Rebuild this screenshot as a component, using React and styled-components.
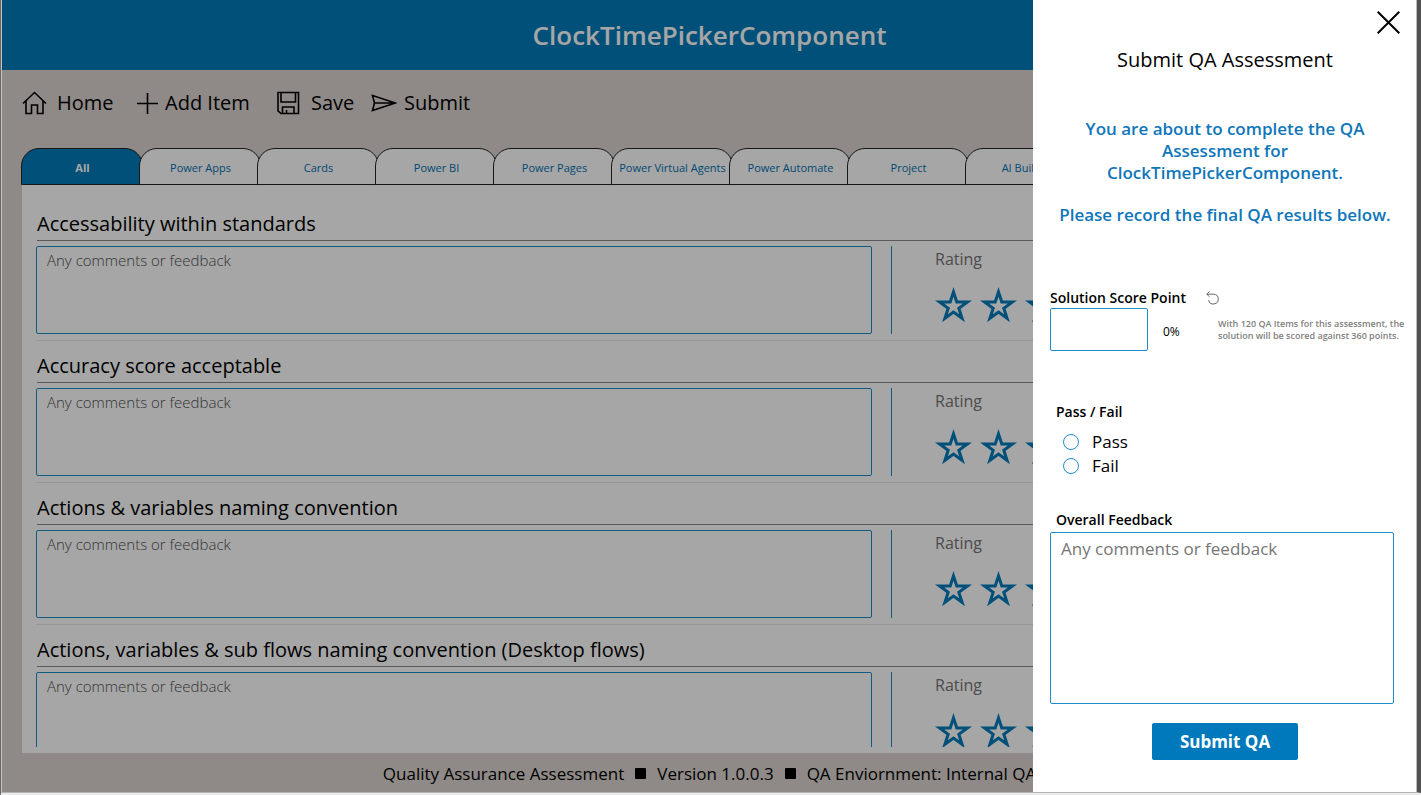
import React, { useState } from "react";
import styled, { createGlobalStyle, ThemeProvider } from "styled-components";

const theme = {
  blue: "#007bbc",
  ink: "#000000",
  muted: "#767676",
  canvas: "#dcd4d1",
  line: "#1f8ccb",
};

const GlobalStyle = createGlobalStyle`
  *, *::before, *::after { box-sizing: border-box; }
  body {
    margin: 0;
    background: #ebebeb;
    font-family: "Open Sans", "Noto Sans", sans-serif;
    color: ${theme.ink};
  }
  button, input, textarea { font: inherit; color: inherit; }
  button { cursor: pointer; }
`;

const Viewport = styled.div`
  height: 100vh;
  min-height: 640px;
  padding-bottom: 2px;
  border-left: 1px solid #6a6a6a;
  overflow: hidden;
`;

const Frame = styled.div`
  position: relative;
  height: 100%;
  border-style: solid;
  border-width: 0 4px 1px 1px;
  border-color: transparent #525252 #b4b4b4 #c0c0c0;
  overflow: hidden;
`;

const Page = styled.div`
  display: flex;
  flex-direction: column;
  height: 100%;
  background: ${(p) => p.theme.canvas};
`;

const Header = styled.header`
  display: flex;
  align-items: center;
  justify-content: center;
  flex: 0 0 70px;
  background: ${(p) => p.theme.blue};
`;

const AppTitle = styled.h1`
  margin: 0;
  font-size: 26px;
  line-height: 36px;
  font-weight: 600;
  color: #fff;
`;

const Toolbar = styled.nav`
  display: flex;
  align-items: center;
  flex: 0 0 66px;
  padding-left: 20px;
`;

const ToolButton = styled.button`
  display: flex;
  align-items: center;
  width: ${(p) => p.$width}px;
  padding: 0;
  border: 0;
  background: none;
  font-size: 20px;
  line-height: 28px;
  white-space: nowrap;
`;

const ToolIcon = styled.span`
  display: flex;
  flex: 0 0 ${(p) => p.$slot}px;
  svg { display: block; }
`;

const Tabs = styled.div`
  display: flex;
  flex: 0 0 37px;
  margin: 12px 20px 0 19px;
  overflow: hidden;
`;

const Tab = styled.button`
  flex: 0 0 122px;
  margin-right: -4px;
  padding: 2px 0 0 1px;
  border: 1px solid #222;
  border-radius: 18px 18px 0 0;
  background: ${(p) => (p.$active ? p.theme.blue : "#fff")};
  color: ${(p) => (p.$active ? "#fff" : "#0070b0")};
  font-size: 11px;
  line-height: 16px;
  font-weight: ${(p) => (p.$active ? 700 : 400)};
  white-space: nowrap;
`;

const Card = styled.main`
  flex: 1 1 0;
  min-height: 0;
  margin: 0 20px;
  padding: 14px 15px 6px 14px;
  background: #fff;
`;

const List = styled.div`
  height: 100%;
  overflow: hidden;
`;

const Item = styled.section`
  height: 142px;
  border-bottom: 1px solid #e6e6e6;
`;

const ItemTitle = styled.h2`
  height: 42px;
  margin: 0 0 5px 1px;
  padding-top: 11px;
  border-bottom: 1px solid #8a8a8a;
  font-size: 20px;
  line-height: 28px;
  font-weight: 400;
`;

const ItemBody = styled.div`
  display: flex;
  height: 88px;
`;

const TextArea = styled.textarea`
  display: block;
  resize: none;
  border: 1px solid ${(p) => p.theme.line};
  border-radius: 2px;
  background: #fff;
  outline: 0;
  &::placeholder { color: ${(p) => p.theme.muted}; opacity: 1; }
`;

const ItemComments = styled(TextArea)`
  flex: 1;
  padding: 3px 10px;
  font-size: 15px;
  line-height: 20px;
  font-weight: 300;
  &::placeholder { color: #505050; }
`;

const Rating = styled.div`
  flex: 0 0 491px;
  margin-left: 19px;
  padding-left: 43px;
  border-left: 1px solid ${(p) => p.theme.line};
`;

const RatingLabel = styled.div`
  font-size: 16px;
  line-height: 26px;
  color: ${(p) => p.theme.muted};
`;

const Stars = styled.div`
  display: flex;
  gap: 8px;
  margin-top: 14px;
`;

const StarButton = styled.button`
  padding: 0;
  border: 0;
  background: none;
  color: ${(p) => p.theme.blue};
  svg { display: block; }
`;

const Footer = styled.footer`
  display: flex;
  align-items: center;
  justify-content: center;
  gap: 11px;
  flex: 0 0 39px;
  padding-top: 2px;
  font-size: 17px;
  line-height: 24px;
  white-space: nowrap;
`;

const Square = styled.span`
  width: 11px;
  height: 11px;
  border-radius: 1px;
  background: #000;
`;

const Overlay = styled.div`
  position: absolute;
  inset: 0;
  display: flex;
  justify-content: flex-end;
  background: rgba(0, 0, 0, 0.35);
`;

const Panel = styled.form`
  display: flex;
  flex-direction: column;
  width: 384px;
  padding: 0 16px 0 17px;
  border-right: 1px solid #bbb;
  background: #fff;
  overflow: hidden;
`;

const CloseButton = styled.button`
  align-self: flex-end;
  margin-top: 11px;
  padding: 0;
  border: 0;
  background: none;
  svg { display: block; }
`;

const PanelTitle = styled.h2`
  margin: 12px 0 0;
  text-align: center;
  font-size: 20px;
  line-height: 28px;
  font-weight: 500;
`;

const Message = styled.div`
  margin-top: 44px;
  text-align: center;
  font-size: 17px;
  line-height: 22px;
  font-weight: 600;
  color: #0f76ba;
  p { margin: 0 0 20px; }
`;

const FieldLabel = styled.label`
  font-size: 14px;
  line-height: 20px;
  font-weight: 600;
`;

const ScoreHeading = styled.div`
  display: flex;
  align-items: center;
  gap: 20px;
  margin-top: 42px;
`;

const ResetButton = styled.button`
  padding: 0;
  border: 0;
  background: none;
  svg { display: block; }
`;

const ScoreRow = styled.div`
  display: grid;
  grid-template-columns: 98px 40px 1fr;
  column-gap: 15px;
  align-items: center;
  margin-right: -10px;
`;

const ScoreInput = styled.input`
  width: 98px;
  height: 43px;
  padding: 0 10px;
  border: 1px solid ${(p) => p.theme.line};
  border-radius: 2px;
  outline: 0;
  font-size: 17px;
`;

const Percent = styled.output`
  padding-top: 4px;
  font-size: 12px;
  line-height: 16px;
`;

const Note = styled.p`
  margin: 0;
  font-size: 9px;
  line-height: 12px;
  font-weight: 600;
  color: #808080;
  white-space: nowrap;
`;

const Choices = styled.fieldset`
  min-width: 0;
  margin: 51px 0 0;
  padding: 0 0 0 6px;
  border: 0;
  legend {
    padding: 0;
    margin-bottom: 8px;
    font-size: 14px;
    line-height: 20px;
    font-weight: 600;
  }
`;

const Choice = styled.label`
  display: flex;
  align-items: center;
  gap: 13px;
  padding-left: 7px;
  font-size: 17px;
  line-height: 24px;
`;

const Radio = styled.input`
  appearance: none;
  width: 16px;
  height: 16px;
  margin: 0;
  border: 1px solid ${(p) => p.theme.line};
  border-radius: 50%;
  background: #fff;
  &:checked { box-shadow: inset 0 0 0 3px #fff; background: ${(p) => p.theme.blue}; }
`;

const FeedbackLabel = styled(FieldLabel)`
  margin: 32px 0 2px 6px;
`;

const Feedback = styled(TextArea)`
  width: 344px;
  height: 172px;
  padding: 4px 10px;
  font-size: 17px;
  line-height: 24px;
`;

const SubmitButton = styled.button`
  align-self: center;
  margin-top: 19px;
  width: 146px;
  height: 37px;
  padding: 0;
  border: 0;
  border-radius: 2px;
  background: #0079bc;
  color: #fff;
  font-size: 17px;
  font-weight: 700;
`;

const line = { fill: "none", stroke: "currentColor", "aria-hidden": true };

const HomeIcon = () => (
  <svg width="25" height="24" viewBox="0 0 25 24" strokeWidth="1.600" {...line}>
    <path d="M1 12.5 12.5 1.5 24 12.5M4 10v12.500h5.500v-8.500h6v8.500H21V10" />
  </svg>
);

const PlusIcon = () => (
  <svg width="21" height="21" viewBox="0 0 21 21" strokeWidth="1.600" {...line}>
    <path d="M10.500 0v21M0 10.500h21" />
  </svg>
);

const SaveIcon = () => (
  <svg width="24" height="24" viewBox="0 0 24 24" strokeWidth="1.600" {...line}>
    <path d="M2 1.500h20.500v21H5L2 19.800zM5 1.500V11h14.500V1.500M6.500 22.500V16h11.500v6.500M10.500 22.500V19" />
  </svg>
);

const SendIcon = () => (
  <svg width="26" height="18" viewBox="0 0 26 18" strokeWidth="1.600" {...line}>
    <path d="M1.500 1.500 24.500 9 1.500 16.500 3.500 9zM3.500 9h20" />
  </svg>
);

const StarIcon = () => (
  <svg width="37" height="39" viewBox="0 -1 37 39" strokeWidth="3" strokeMiterlimit="10" {...line}>
    <path d="M18.500 4.900 21.780 15h10.610l-8.580 6.220 3.270 10.090-8.580-6.230-8.580 6.230 3.270-10.090L4.610 15h10.610z" />
  </svg>
);

const CloseIcon = () => (
  <svg width="23" height="23" viewBox="0 0 23 23" strokeWidth="2" {...line}>
    <path d="M.7.7l21.600 21.600M22.300.7.7 22.300" />
  </svg>
);

const ResetIcon = () => (
  <svg width="14" height="14" viewBox="0 0 14 14" strokeWidth="1" {...line} stroke="#666">
    <path d="M3.500.5.8 3.200l2.700 2.600M.8 3.200h6.700a4.900 4.900 0 1 1-4.900 6" />
  </svg>
);

const tools = [
  { label: "Home", Icon: HomeIcon, slot: 35, width: 115 },
  { label: "Add Item", Icon: PlusIcon, slot: 28, width: 139 },
  { label: "Save", Icon: SaveIcon, slot: 35, width: 95 },
  { label: "Submit", Icon: SendIcon, slot: 33, width: 110 },
];

const tabs = [
  "All",
  "Power Apps",
  "Cards",
  "Power BI",
  "Power Pages",
  "Power Virtual Agents",
  "Power Automate",
  "Project",
  "AI Builder",
];

const items = [
  "Accessability within standards",
  "Accuracy score acceptable",
  "Actions & variables naming convention",
  "Actions, variables & sub flows naming convention (Desktop flows)",
];

export default function App() {
  const [result, setResult] = useState("");
  return (
    <ThemeProvider theme={theme}>
      <GlobalStyle />
      <Viewport>
        <Frame>
          <Page>
            <Header>
              <AppTitle>ClockTimePickerComponent</AppTitle>
            </Header>
            <Toolbar>
              {tools.map(({ label, Icon, slot, width }) => (
                <ToolButton key={label} type="button" $width={width}>
                  <ToolIcon $slot={slot}>
                    <Icon />
                  </ToolIcon>
                  {label}
                </ToolButton>
              ))}
            </Toolbar>
            <Tabs role="tablist">
              {tabs.map((name, i) => (
                <Tab key={name} type="button" role="tab" aria-selected={i === 0} $active={i === 0}>
                  {name}
                </Tab>
              ))}
            </Tabs>
            <Card>
              <List>
                {items.map((name) => (
                  <Item key={name}>
                    <ItemTitle>{name}</ItemTitle>
                    <ItemBody>
                      <ItemComments aria-label={name} placeholder="Any comments or feedback" />
                      <Rating>
                        <RatingLabel>Rating</RatingLabel>
                        <Stars>
                          {[1, 2, 3].map((n) => (
                            <StarButton key={n} type="button" aria-label={`Rate ${n}`}>
                              <StarIcon />
                            </StarButton>
                          ))}
                        </Stars>
                      </Rating>
                    </ItemBody>
                  </Item>
                ))}
              </List>
            </Card>
            <Footer>
              <span>Quality Assurance Assessment</span>
              <Square />
              <span>Version 1.0.0.3</span>
              <Square />
              <span>QA Enviornment: Internal QA</span>
            </Footer>
          </Page>
          <Overlay>
            <Panel onSubmit={(e) => e.preventDefault()}>
              <CloseButton type="button" aria-label="Close">
                <CloseIcon />
              </CloseButton>
              <PanelTitle>Submit QA Assessment</PanelTitle>
              <Message>
                <p>You are about to complete the QA Assessment for ClockTimePickerComponent.</p>
                <p>Please record the final QA results below.</p>
              </Message>
              <ScoreHeading>
                <FieldLabel htmlFor="score">Solution Score Point</FieldLabel>
                <ResetButton type="button" aria-label="Reset score">
                  <ResetIcon />
                </ResetButton>
              </ScoreHeading>
              <ScoreRow>
                <ScoreInput id="score" type="text" inputMode="numeric" />
                <Percent htmlFor="score">0%</Percent>
                <Note>
                  With 120 QA Items for this assessment, the
                  <br />
                  solution will be scored against 360 points.
                </Note>
              </ScoreRow>
              <Choices>
                <legend>Pass / Fail</legend>
                {["Pass", "Fail"].map((name) => (
                  <Choice key={name}>
                    <Radio
                      type="radio"
                      name="result"
                      checked={result === name}
                      onChange={() => setResult(name)}
                    />
                    {name}
                  </Choice>
                ))}
              </Choices>
              <FeedbackLabel htmlFor="feedback">Overall Feedback</FeedbackLabel>
              <Feedback id="feedback" placeholder="Any comments or feedback" />
              <SubmitButton type="submit">Submit QA</SubmitButton>
            </Panel>
          </Overlay>
        </Frame>
      </Viewport>
    </ThemeProvider>
  );
}
